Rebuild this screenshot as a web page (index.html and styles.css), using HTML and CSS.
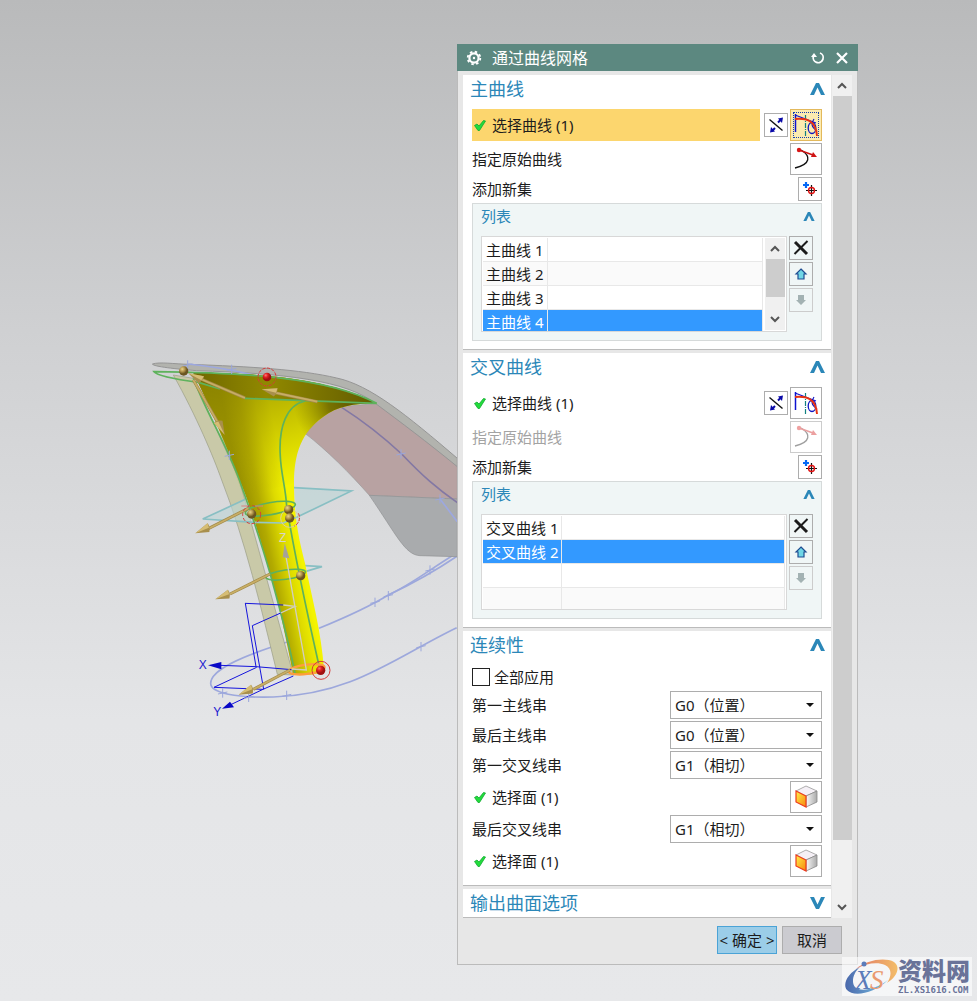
FILE: index.html
```html
<!DOCTYPE html>
<html lang="zh-CN">
<head>
<meta charset="utf-8">
<title>通过曲线网格</title>
<meta name="viewport" content="width=device-width, initial-scale=1">
<link rel="stylesheet" href="styles.css">
</head>
<body>

<!-- shared icons -->
<svg class="defs" aria-hidden="true">
  <defs>
    <linearGradient id="orange" x1="0" y1="0" x2="1" y2="1"><stop offset="0" stop-color="#fff04a"/><stop offset="1" stop-color="#f7860c"/></linearGradient>
    <linearGradient id="silver" x1="0" x2="1"><stop offset="0" stop-color="#fafafa"/><stop offset="1" stop-color="#a9a9a9"/></linearGradient>
  </defs>
  <symbol id="i-up" viewBox="0 0 15 12"><path d="M0 12 6 0h3l6 12h-4L7.500 4.500 4 12z" fill="#2b87b8"/></symbol>
  <symbol id="i-arrow" viewBox="0 0 10 7"><path d="M1 6l4-4 4 4" fill="none" stroke="#555" stroke-width="2"/></symbol>
  <symbol id="i-check" viewBox="0 0 12 12"><path d="M.5 6.500l2.500-1.500 2 2 4.500-5.500 2 .5-6 9.500h-1.500z" fill="#22dc3c" stroke="#0fa82e" stroke-width=".8"/></symbol>
  <symbol id="i-reverse" viewBox="1 1 22 22">
    <path d="M5.500 6.500L18.500 17.500" stroke="#111" stroke-width="1.400"/>
    <path d="M8 18l3-3M14 9.500l3-3" stroke="#0a0aa8" stroke-width="2"/>
    <path d="M19 4.500l-5 1 4 4.500zM6 19.500l1-5.500 4 4.500z" fill="#0a0aa8"/>
  </symbol>
  <symbol id="i-curve" viewBox="1 1 30 30">
    <path d="M5.500 5v18" stroke="#0c12d0" stroke-width="1.500"/>
    <path d="M5 6l21 8" stroke="#0c12d0" stroke-width="1.200"/>
    <path d="M15.500 6v22" stroke="#118080" stroke-width="1.200" stroke-dasharray="5 1 1 1"/>
    <ellipse cx="22" cy="19" rx="3.800" ry="5.500" fill="none" stroke="#0c12c0" stroke-width="1.300"/>
    <path d="M24 10c-3 4-3 8 3 12" fill="none" stroke="#0c12c0" stroke-width="1.200"/>
    <path d="M5 10c11-1 21 1 22 17" fill="none" stroke="#e83212" stroke-width="1.900"/>
  </symbol>
  <symbol id="i-origin" viewBox="1 1 30 30">
    <path d="M5 25c16-4 16-12 6-18" fill="none" stroke="#111" stroke-width="1.300"/>
    <path d="M9 7l14 5" stroke="#c11" stroke-width="1.500"/>
    <circle cx="9" cy="7" r="2.200" fill="#d81616"/><path d="M21 14l2-5 4 5z" fill="#d01414"/>
  </symbol>
  <symbol id="i-add" viewBox="1 1 22 22">
    <path d="M5 8h6M8 5v6" stroke="#0568f5" stroke-width="2.200"/>
    <path d="M8 13.500h11M13.500 8v11" stroke="#111" stroke-width="1.200"/>
    <circle cx="13.500" cy="13.500" r="3" fill="none" stroke="#e21212" stroke-width="1.400"/>
  </symbol>
  <symbol id="i-delete" viewBox="1 1 22 22"><path d="M6 6l12 12" stroke="#1b1b1b" stroke-width="3"/><path d="M18.500 5L5.500 18" stroke="#1b1b1b" stroke-width="2"/></symbol>
  <symbol id="i-move" viewBox="1 1 22 22"><path d="M12 7l5 5h-2v5H9v-5H7z" fill="#6fd6e6" stroke="#1f4d91" stroke-width="1.200"/></symbol>
  <symbol id="i-down" viewBox="1 1 22 22"><path d="M12 17l-5-5h2V7h6v5h2z" fill="#a3b2b3"/></symbol>
  <symbol id="i-cube" viewBox="1 1 30 30">
    <path d="M6 10l10-5 11 5-11 5z" fill="#f5f0f6" stroke="#999" stroke-width=".8"/>
    <path d="M16 15l11-5v11l-11 5z" fill="url(#silver)" stroke="#888" stroke-width=".8"/>
    <path d="M6 10l10 5v11L6 21z" fill="url(#orange)" stroke="#ef3a1c" stroke-width="1.200"/>
  </symbol>
</svg>

<main class="viewport">

  <svg class="model" viewBox="0 0 960 1140" role="img" aria-label="model">
    <defs>
      <linearGradient id="body" gradientUnits="userSpaceOnUse" x1="355" y1="677" x2="490" y2="649">
        <stop offset="0" stop-color="#958d00"/><stop offset=".35" stop-color="#b2aa00"/><stop offset=".7" stop-color="#dedb00"/><stop offset="1" stop-color="#f4f400"/>
      </linearGradient>
      <linearGradient id="flare" gradientUnits="userSpaceOnUse" x1="250" y1="90" x2="360" y2="440">
        <stop offset="0" stop-color="#8a8200" stop-opacity=".8"/><stop offset=".5" stop-color="#9c9400" stop-opacity=".45"/><stop offset="1" stop-color="#a9a100" stop-opacity="0"/>
      </linearGradient>
      <radialGradient id="flareEnd" gradientUnits="userSpaceOnUse" cx="650" cy="150" r="190">
        <stop offset="0" stop-color="#5b5400"/><stop offset=".45" stop-color="#6b6400" stop-opacity=".85"/><stop offset="1" stop-color="#8a8300" stop-opacity="0"/>
      </radialGradient>
      <linearGradient id="rim" x1="0" x2="1"><stop offset="0" stop-color="#6f6700"/><stop offset=".4" stop-color="#918900"/><stop offset="1" stop-color="#625b00"/></linearGradient>
      <radialGradient id="gold" cx=".35" cy=".3"><stop offset="0" stop-color="#ead38b"/><stop offset=".5" stop-color="#b79a51"/><stop offset="1" stop-color="#6b5520"/></radialGradient>
      <radialGradient id="red" cx=".35" cy=".3"><stop offset="0" stop-color="#ff7777"/><stop offset=".5" stop-color="#df2020"/><stop offset="1" stop-color="#a01010"/></radialGradient>
      <g id="cone"><path d="M0 0L46-12Q50 0 40 14z" fill="#a88f4c"/><path d="M0 0L46-12 44 2z" fill="#d6bd74"/></g>
      <path id="tick" d="M-14 3L14-3M0-14V14" fill="none" stroke="#9ba7dc" stroke-width="3"/>
    </defs>

    <!-- guide curves -->
    <g fill="none" stroke="#9da8dc" stroke-width="5">
      <path d="M442 876C300 920 212 960 212 1000C212 1030 290 1044 400 1041C640 1032 760 925 950 833"/>
      <path d="M537 835C610 805 680 775 745 735C820 700 880 650 952 608"/>
      <path d="M745 735C830 695 890 660 952 618"/>
    </g>

    <!-- sheets -->
    <path d="M605 170L715 160C800 230 900 300 952 350V447L688 436C630 370 560 300 495 250C520 210 560 180 605 170z" fill="#b8a2a2" stroke="#999" stroke-width="2"/>
    <path d="M688 436L952 447V620L840 617C795 615 770 555 688 436z" fill="#a9abad" stroke="#8f9193" stroke-width="2"/>
    <path d="M37 42C60 35 100 42 150 43C330 50 480 58 590 84C690 105 800 195 952 325V350C860 275 780 215 710 163C620 90 430 70 170 62C110 57 40 50 37 42z" fill="#b2b3ae" stroke="#969696" stroke-width="3"/>
    <path d="M605 172C680 220 740 270 785 312C850 380 890 415 952 458" fill="none" stroke="#8378a4" stroke-width="5"/>
    <path d="M900 447L952 515M145 42C220 50 280 60 340 75" fill="none" stroke="#9da8e0" stroke-width="5"/>
    <path d="M100 75C170 200 220 320 245 390C315 570 365 780 412 973L460 975L298 390L160 85z" fill="#c9c9a8" stroke="#999b85" stroke-width="2"/>
    <path d="M462 413L634 423L470 502zM188 507L316 448L340 515z" fill="#bdd5d5" fill-opacity=".6"/>
    <path d="M462 413L634 423L470 502M188 507L316 448M188 507L345 517M495 647L546 650L495 665" fill="none" stroke="#88bfc3" stroke-width="5"/>

    <!-- lofted body -->
    <g>
      <path d="M160 68C320 68 560 80 710 160C640 160 590 170 550 200C485 245 462 310 462 400C462 510 480 580 495 640C515 740 545 850 552 960C540 975 500 975 460 975C435 850 410 730 390 670C350 530 325 450 298 390C260 290 220 190 160 68z" fill="url(#body)"/>
      <path d="M160 68C320 68 560 80 710 160C640 160 590 170 550 200C485 245 462 310 462 400L310 440C260 290 220 190 160 68z" fill="url(#flare)"/>
      <path d="M410 145L710 160C640 160 590 170 550 200C510 225 480 280 470 320C430 260 430 180 410 145z" fill="url(#flareEnd)"/>
      <path d="M160 68C320 68 560 80 710 160L315 145L175 92z" fill="url(#rim)"/>
    </g>

    <g fill="none" stroke="#5eb25c" stroke-width="5">
      <path d="M240 117L175 97C110 88 50 75 42 65C300 68 560 80 710 160L315 145"/>
      <path d="M495 153C440 165 415 230 421 320C423 370 438 420 440 470C455 560 490 740 540 960"/>
      <path d="M160 85C200 190 260 285 298 390C345 520 370 600 390 670C415 760 445 870 465 970"/>
      <ellipse cx="391" cy="476" rx="76" ry="18" transform="rotate(-10 391 476)"/>
      <ellipse cx="437" cy="674" rx="60" ry="14" transform="rotate(-8 437 674)"/>
    </g>
    <path d="M345 517L430 519L470 502" fill="none" stroke="#96c8c4" stroke-width="5"/>
    <ellipse cx="500" cy="958" rx="54" ry="14" transform="rotate(-7 500 958)" fill="none" stroke="#ff9d3c" stroke-width="7"/>

    <!-- datum axes -->
    <g fill="none" stroke="#1414dc" stroke-width="3">
      <path d="M315 760L430 765M316 760L348 950M337 827L422 789M337 827L371 1018M348 950L240 946M348 950L455 959M350 952L222 1012L369 1018L460 978M369 1018L270 1065"/>
    </g>
    <path d="M204 946L244 936V958zM246 1076L270 1055L282 1072z" fill="#0808c6"/>
    <g fill="none" stroke="#d1cec2" stroke-width="4"><path d="M438 620L499 960L455 957M430 765L465 769L422 789"/></g>
    <path d="M434 580L448 625L428 622z" fill="#a5a29b"/>
    <g class="axis-name"><text x="176" y="958">X</text><text x="220" y="1098">Y</text><text x="417" y="575" class="axis-z">Z</text></g>

    <g>
      <use href="#tick" x="143" y="45"/><use href="#tick" x="275" y="58"/><use href="#tick" x="268" y="316"/>
      <use href="#tick" x="783" y="312"/><use href="#tick" x="900" y="447"/><use href="#tick" x="705" y="757"/>
      <use href="#tick" x="745" y="737"/><use href="#tick" x="870" y="660"/><use href="#tick" x="843" y="890"/>
      <use href="#tick" x="440" y="1036"/><use href="#tick" x="326" y="1042"/><use href="#tick" x="248" y="1029"/>
    </g>

    <!-- drag handles -->
    <g stroke="#a28a48" stroke-width="9">
      <path id="shafts" d="M315 144L180 86M160 90L235 220M532 155L405 128M325 475L205 536M390 672L270 732M450 960L340 1018"/>
    </g>
    <use href="#shafts" stroke="#c8ae66" stroke-width="5"/>
    <use href="#cone" transform="translate(145 70) rotate(25)"/>
    <use href="#cone" transform="translate(254 254) rotate(242)"/>
    <use href="#cone" transform="translate(365 118) rotate(11)"/>
    <use href="#cone" transform="translate(166 550) rotate(-25)"/>
    <use href="#cone" transform="translate(226 748) rotate(-23)"/>
    <use href="#cone" transform="translate(296 1034) rotate(-24)"/>
    <g fill="none" stroke-width="3">
      <circle cx="381" cy="81" r="27" stroke="#d73a3a" stroke-dasharray="10 4"/>
      <circle cx="335" cy="494" r="27" stroke="#d73a3a" stroke-dasharray="10 6"/>
      <circle cx="449" cy="505" r="27" stroke="#d9cfa5"/>
      <path d="M345 468h24M304 468h20" stroke="#d98080"/>
      <path d="M475 490a27 27 0 0 1-12 38" stroke="#d73a3a" stroke-dasharray="10 4"/>
      <circle cx="543" cy="961" r="27" stroke="#d73a3a"/>
    </g>
    <g fill="url(#gold)"><circle cx="131" cy="63" r="14"/><circle cx="335" cy="492" r="14"/><circle cx="446" cy="479" r="14"/><circle cx="449" cy="504" r="14"/><circle cx="482" cy="677" r="14"/></g>
    <g fill="url(#red)"><circle cx="381" cy="81" r="13"/><circle cx="542" cy="961" r="14"/></g>
  </svg>

  <form class="dialog">
    <header class="titlebar">
      <svg class="gear" viewBox="0 0 16 16"><circle cx="8" cy="8" r="4.600" fill="none" stroke="#fff" stroke-width="2.200"/><circle cx="8" cy="8" r="6.300" fill="none" stroke="#fff" stroke-width="1.800" stroke-dasharray="2.500 2.448"/><circle cx="8" cy="8" r="1.200" fill="#fff"/></svg>
      <h1>通过曲线网格</h1>
      <button type="button" class="tool" aria-label="重置"><svg viewBox="0 0 14 14"><path d="M9 2a5 5 0 1 1-6.500 3" fill="none" stroke="#fff" stroke-width="1.800"/><path d="M0 6l3-4 3 4z" fill="#fff"/></svg></button>
      <button type="button" class="tool" aria-label="关闭"><svg viewBox="0 0 14 14"><path d="M2 2l10 10M12 2L2 12" stroke="#fff" stroke-width="2.200"/></svg></button>
    </header>

    <div class="scroller">
      <div class="panels">

        <section class="panel">
          <div class="panel-head"><h2>主曲线</h2><button type="button" class="fold" aria-label="折叠"><svg><use href="#i-up"/></svg></button></div>
          <div class="rows">
            <div class="row">
              <div class="pick active"><svg class="check"><use href="#i-check"/></svg>选择曲线 (1)</div>
              <button type="button" class="btn small" aria-label="反向"><svg><use href="#i-reverse"/></svg></button>
              <button type="button" class="btn on" aria-label="曲线"><svg><use href="#i-curve"/></svg></button>
            </div>
            <div class="row"><span class="label">指定原始曲线</span><button type="button" class="btn" aria-label="指定原始曲线"><svg><use href="#i-origin"/></svg></button></div>
            <div class="row"><span class="label">添加新集</span><button type="button" class="btn small" aria-label="添加新集"><svg><use href="#i-add"/></svg></button></div>
            <div class="group">
              <div class="group-head"><h3>列表</h3><button type="button" class="fold" aria-label="折叠"><svg><use href="#i-up"/></svg></button></div>
              <div class="group-body">
                <div class="list">
                  <table>
                    <tr><td>主曲线 1</td><td></td></tr>
                    <tr><td>主曲线 2</td><td></td></tr>
                    <tr><td>主曲线 3</td><td></td></tr>
                    <tr class="selected"><td>主曲线 4</td><td></td></tr>
                  </table>
                  <div class="scrollbar"><svg><use href="#i-arrow"/></svg><i class="thumb"></i><svg class="flip"><use href="#i-arrow"/></svg></div>
                </div>
                <div class="side">
                  <button type="button" class="btn small" aria-label="移除"><svg><use href="#i-delete"/></svg></button>
                  <button type="button" class="btn small" aria-label="上移"><svg><use href="#i-move"/></svg></button>
                  <button type="button" class="btn small" aria-label="下移" disabled><svg><use href="#i-down"/></svg></button>
                </div>
              </div>
            </div>
          </div>
        </section>

        <section class="panel">
          <div class="panel-head"><h2>交叉曲线</h2><button type="button" class="fold" aria-label="折叠"><svg><use href="#i-up"/></svg></button></div>
          <div class="rows">
            <div class="row">
              <div class="pick"><svg class="check"><use href="#i-check"/></svg>选择曲线 (1)</div>
              <button type="button" class="btn small" aria-label="反向"><svg><use href="#i-reverse"/></svg></button>
              <button type="button" class="btn" aria-label="曲线"><svg><use href="#i-curve"/></svg></button>
            </div>
            <div class="row"><span class="label off">指定原始曲线</span><button type="button" class="btn faded" aria-label="指定原始曲线" disabled><svg><use href="#i-origin"/></svg></button></div>
            <div class="row"><span class="label">添加新集</span><button type="button" class="btn small" aria-label="添加新集"><svg><use href="#i-add"/></svg></button></div>
            <div class="group">
              <div class="group-head"><h3>列表</h3><button type="button" class="fold" aria-label="折叠"><svg><use href="#i-up"/></svg></button></div>
              <div class="group-body">
                <div class="list">
                  <table>
                    <tr><td>交叉曲线 1</td><td></td></tr>
                    <tr class="selected"><td>交叉曲线 2</td><td></td></tr>
                    <tr><td></td><td></td></tr>
                    <tr><td></td><td></td></tr>
                  </table>
                </div>
                <div class="side">
                  <button type="button" class="btn small" aria-label="移除"><svg><use href="#i-delete"/></svg></button>
                  <button type="button" class="btn small" aria-label="上移"><svg><use href="#i-move"/></svg></button>
                  <button type="button" class="btn small" aria-label="下移" disabled><svg><use href="#i-down"/></svg></button>
                </div>
              </div>
            </div>
          </div>
        </section>

        <section class="panel">
          <div class="panel-head"><h2>连续性</h2><button type="button" class="fold" aria-label="折叠"><svg><use href="#i-up"/></svg></button></div>
          <div class="rows">
            <div class="row tick-row"><input type="checkbox" id="all"><label for="all">全部应用</label></div>
            <div class="row"><label class="label" for="s1">第一主线串</label><span class="combo"><select id="s1"><option>G0（位置）</option></select></span></div>
            <div class="row"><label class="label" for="s2">最后主线串</label><span class="combo"><select id="s2"><option>G0（位置）</option></select></span></div>
            <div class="row"><label class="label" for="s3">第一交叉线串</label><span class="combo"><select id="s3"><option>G1（相切）</option></select></span></div>
            <div class="row"><div class="pick"><svg class="check"><use href="#i-check"/></svg>选择面 (1)</div><button type="button" class="btn" aria-label="选择面"><svg><use href="#i-cube"/></svg></button></div>
            <div class="row"><label class="label" for="s4">最后交叉线串</label><span class="combo"><select id="s4"><option>G1（相切）</option></select></span></div>
            <div class="row"><div class="pick"><svg class="check"><use href="#i-check"/></svg>选择面 (1)</div><button type="button" class="btn" aria-label="选择面"><svg><use href="#i-cube"/></svg></button></div>
          </div>
        </section>

        <section class="panel closed">
          <div class="panel-head"><h2>输出曲面选项</h2><button type="button" class="fold" aria-label="展开"><svg class="flip"><use href="#i-up"/></svg></button></div>
        </section>

      </div>
      <div class="scrollbar main-bar"><svg><use href="#i-arrow"/></svg><i class="thumb"></i><svg class="flip"><use href="#i-arrow"/></svg></div>
    </div>

    <footer class="actions">
      <button type="submit" class="ok">&lt; 确定 &gt;</button>
      <button type="button">取消</button>
    </footer>
  </form>

  <div class="watermark">
    <svg viewBox="0 0 54 36">
      <defs>
        <linearGradient id="wmBlue" x1="0" x2="1"><stop offset="0" stop-color="#4a68ab"/><stop offset="1" stop-color="#79c4e6"/></linearGradient>
        <linearGradient id="wmRed" x1="0" x2="1"><stop offset="0" stop-color="#e07868"/><stop offset="1" stop-color="#f3bd68"/></linearGradient>
      </defs>
      <path d="M16 8C4 14-2 25 3 31c6 7 27 4 41-10C31 31 16 33 11 28 7 23 9 14 16 8z" fill="url(#wmBlue)"/>
      <path d="M12 10C22 1 41-2 50 3c7 5 3 15-7 21 5-7 5-15-2-18-7-3-19-2-29 4z" fill="url(#wmRed)"/>
      <circle cx="20" cy="5" r="2.500" fill="#5b7cba"/>
      <text x="11" y="30" class="wm-x">X</text><text x="26" y="30" class="wm-s">S</text>
    </svg>
    <div><b>资料网</b><small>ZL.XS1616.COM</small></div>
  </div>
</main>

</body>
</html>
```

FILE: styles.css
```css
* {
  box-sizing: border-box;
}
body {
  margin: 0;
  color: #1c1c1c;
  font-family: "Noto Sans", "Noto Sans CJK SC", sans-serif;
  font-size: 15px;
  line-height: 20px;
}
h1, h2, h3 {
  margin: 0;
  font-weight: normal;
}
button, select, input {
  margin: 0;
  font: inherit;
  color: inherit;
}
svg {
  display: block;
}
.defs {
  position: absolute;
  width: 0;
  height: 0;
}
.flip {
  transform: rotate(180deg);
}

/* graphics window */
.viewport {
  position: relative;
  min-height: 100vh;
  padding: 44px 0 36px 457px;
  overflow: hidden;
  background: linear-gradient(#b9babb, #cfd0d2 33%, #e4e5e7 72%, #e7e8ea);
}
.model {
  position: absolute;
  left: 140px;
  top: 350px;
  width: 320px;
  height: 380px;
}
.axis-name {
  font-family: "Liberation Sans", Arial, sans-serif;
  font-size: 36px;
  fill: #2020d0;
}
.axis-z {
  fill: #d8d6c8;
}

/* dialog */
.dialog {
  position: relative;
  width: 401px;
  border: 1px solid #bbb;
  border-top: 0;
  background: #e7e7e7;
}
.titlebar {
  display: flex;
  align-items: center;
  gap: 10px;
  height: 27px;
  margin: 0 -1px;
  padding: 0 9px;
  background: #5c8880;
  color: #fff;
}
.titlebar h1 {
  flex: 1;
  font-size: 16px;
}
.gear {
  width: 16px;
  height: 16px;
}
.tool {
  width: 14px;
  height: 14px;
  padding: 0;
  border: 0;
  background: none;
}
.scroller {
  display: flex;
  gap: 1px;
  padding: 4px 5px 0;
}
.panels {
  flex: 1;
  display: flex;
  flex-direction: column;
  gap: 3px;
}
.panel {
  padding: 0 9px 8px;
  border-bottom: 1px solid #bbb;
  background: #fff;
}
.panel.closed {
  padding-bottom: 0;
}
.panel-head {
  display: flex;
  align-items: center;
  justify-content: space-between;
  height: 28px;
  margin: 0 -3px 0 -2px;
}
.panel-head h2 {
  color: #2b87b8;
  font-size: 18px;
}
.fold {
  padding: 0;
  border: 0;
  background: none;
}
.fold svg {
  width: 15px;
  height: 12px;
}
.rows {
  display: flex;
  flex-direction: column;
  gap: 2px;
  padding-top: 6px;
}
.row {
  display: flex;
  align-items: center;
  gap: 2px;
}
.label {
  flex: 1;
}
.label.off {
  color: #a3a3a3;
}
.pick {
  flex: 1;
  display: flex;
  align-items: center;
  gap: 6px;
  height: 32px;
  margin-right: 2px;
  padding-left: 2px;
}
.pick.active {
  background: #fcd66e;
}
.check {
  width: 12px;
  height: 12px;
}
.btn {
  width: 32px;
  height: 32px;
  padding: 0;
  border: 1px solid #adadad;
  background: #fff;
}
.btn svg {
  width: 100%;
  height: 100%;
}
.btn.small {
  width: 24px;
  height: 24px;
}
.btn.on {
  border-color: #e3b95c;
  background: #fcebb0;
  outline: 1px dotted #1540b0;
  outline-offset: -4px;
}
.btn:disabled {
  border-color: #ccc;
}
.btn.faded svg {
  opacity: .4;
}

/* list group */
.group {
  padding: 0 8px 8px;
  border: 1px solid #d6dada;
  background: #f0f6f6;
}
.group-head {
  display: flex;
  align-items: center;
  justify-content: space-between;
  height: 24px;
  margin: 0 -2px 8px 0;
}
.group-head h3 {
  color: #2b87b8;
  font-size: 15px;
}
.group-head .fold svg {
  width: 12px;
  height: 9px;
}
.group-body {
  display: flex;
  gap: 2px;
}
.list {
  flex: 1;
  display: flex;
  gap: 2px;
  height: 96px;
  padding: 1px;
  border: 1px solid #d8d8d8;
  background: #fff;
  overflow: hidden;
}
.list table {
  flex: 1;
  height: 96px;
  border-collapse: separate;
  border-spacing: 0;
}
.list td {
  width: 100%;
  height: 24px;
  padding: 1px 3px 0;
  border-right: 1px solid #e8e8e8;
  border-bottom: 1px solid #e8e8e8;
  white-space: nowrap;
}
.list td:first-child {
  width: auto;
  min-width: 65px;
}
.list tr:nth-child(even) {
  background: #fafafa;
}
.list tr.selected {
  background: #3399ff;
  color: #fff;
}
.side {
  display: flex;
  flex-direction: column;
  gap: 2px;
}
.side .btn {
  background: #f0f6f6;
}

/* scroll bars */
.scrollbar {
  display: flex;
  flex-direction: column;
  align-items: center;
  width: 20px;
  padding: 7px 0;
  background: #f0f0f0;
}
.scrollbar svg {
  width: 10px;
  height: 7px;
}
.thumb {
  width: 19px;
  height: 38px;
  margin: 7px 0 auto;
  background: #cdcdcd;
}
.main-bar .thumb {
  height: 744px;
}

/* continuity */
.tick-row {
  gap: 4px;
  height: 24px;
}
.tick-row input {
  appearance: none;
  width: 18px;
  height: 18px;
  border: 1px solid #222;
  background: #fff;
}
.combo {
  position: relative;
  width: 152px;
  height: 28px;
}
.combo::after {
  content: "";
  position: absolute;
  right: 8px;
  top: 12px;
  border: 4px solid transparent;
  border-top-color: #111;
  border-bottom: 0;
  pointer-events: none;
}
.combo select {
  appearance: none;
  width: 100%;
  height: 100%;
  padding: 0 4px;
  border: 1px solid #adadad;
  border-radius: 0;
  background: #fff;
}

.actions {
  display: flex;
  justify-content: flex-end;
  gap: 5px;
  padding: 8px 15px 10px;
}
.actions button {
  width: 60px;
  height: 28px;
  padding: 0;
  border: 1px solid #adadad;
  background: #cbcbd0;
  white-space: nowrap;
}
.actions .ok {
  border-color: #4ba3d6;
  background: #9bcde8;
}

.watermark {
  position: absolute;
  right: 5px;
  bottom: 5px;
  display: flex;
  align-items: center;
  padding: 0 2px;
  background: rgba(255, 255, 255, .6);
  color: #6a7399;
}
.watermark svg {
  width: 54px;
  height: 36px;
}
.watermark b {
  display: block;
  font-size: 24px;
  font-weight: 900;
  line-height: 27px;
}
.watermark small {
  display: block;
  font: bold 9px/12px "DejaVu Sans Mono", monospace;
}
.wm-x, .wm-s {
  font: italic 27px "Liberation Serif", serif;
  fill: #5b7cba;
}
.wm-s {
  fill: #ea9a70;
}
```
